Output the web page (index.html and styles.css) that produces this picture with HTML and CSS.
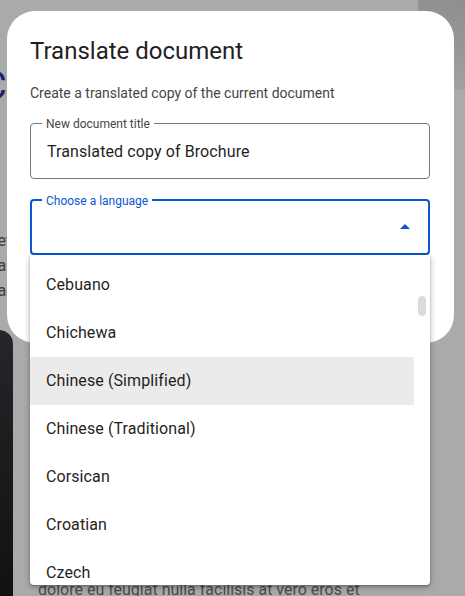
FILE: index.html
```html
<!DOCTYPE html>
<html lang="en">
<head>
  <meta charset="UTF-8">
  <meta name="viewport" content="width=device-width, initial-scale=1.0">
  <title>Translate document</title>
  <link rel="stylesheet" href="styles.css">
</head>
<body>
  <!-- page behind the scrim -->
  <div class="page">
    <div class="corner-shade"></div>
    <div class="doc-heading">Co</div>
    <div class="doc-lines">
      <p>Duis et</p>
      <p>Duis au</p>
      <p>Duis ac</p>
    </div>
    <div class="side-panel"></div>
    <p class="doc-footer-text">dolore eu feugiat nulla facilisis at vero eros et</p>
  </div>

  <div class="dialog">
    <h1 class="dialog-title">Translate document</h1>
    <p class="dialog-subtitle">Create a translated copy of the current document</p>

    <div class="field">
      <span class="field-label">New document title</span>
      <span class="field-value">Translated copy of Brochure</span>
    </div>

    <div class="field field-focused">
      <span class="field-label">Choose a language</span>
      <span class="caret"></span>

      <div class="menu">
        <ul class="menu-list">
          <li>Cebuano</li>
          <li>Chichewa</li>
          <li class="active">Chinese (Simplified)</li>
          <li>Chinese (Traditional)</li>
          <li>Corsican</li>
          <li>Croatian</li>
          <li>Czech</li>
        </ul>
        <div class="menu-scroll">
          <span class="thumb"></span>
        </div>
      </div>
    </div>
  </div>
</body>
</html>
```

FILE: styles.css
```css
* {
  margin: 0;
  padding: 0;
  box-sizing: border-box;
}

body {
  width: 465px;
  height: 596px;
  overflow: hidden;
  position: relative;
  font-family: 'Roboto', 'Noto Sans', sans-serif;
  background-color: #aaaaaa;
  color: #1f1f1f;
}

/* Background page (dimmed) */
.page {
  position: absolute;
  inset: 0;
}

.corner-shade {
  position: absolute;
  top: 0;
  right: 0;
  width: 47px;
  height: 90px;
  background: linear-gradient(200deg, #8f8f8f 0%, #999 60%, #a6a6a6 100%);
}

.doc-heading {
  position: absolute;
  top: 64px;
  left: -18px;
  font-size: 38px;
  color: #1b2467;
}

.doc-lines {
  position: absolute;
  top: 228px;
  left: -38px;
  font-size: 16px;
  line-height: 25px;
  color: #3c3c3c;
}

.side-panel {
  position: absolute;
  top: 330px;
  left: -20px;
  width: 33px;
  height: 280px;
  border-radius: 14px;
  background: linear-gradient(180deg, #25262a 0%, #101010 100%);
}

.doc-footer-text {
  position: absolute;
  top: 580px;
  left: 38px;
  font-size: 16px;
  color: #4a4a4a;
}

/* Dialog */
.dialog {
  position: absolute;
  top: 11px;
  left: 7px;
  width: 447px;
  height: 332px;
  padding: 24px 24px 0 23px;
  background-color: #fff;
  border-radius: 28px;
}

.dialog-title {
  font-size: 24px;
  font-weight: 400;
  line-height: 32px;
  color: #1f1f1f;
}

.dialog-subtitle {
  margin-top: 16px;
  font-size: 14px;
  line-height: 20px;
  color: #444746;
}

.field {
  position: relative;
  height: 56px;
  margin-top: 20px;
  padding: 0 16px;
  display: flex;
  align-items: center;
  border: 1px solid #747775;
  border-radius: 4px;
}

.field-label {
  position: absolute;
  top: -8px;
  left: 11px;
  padding: 0 4px;
  background-color: #fff;
  font-size: 12px;
  line-height: 16px;
  color: #444746;
}

.field-value {
  font-size: 16px;
  letter-spacing: 0.1px;
  color: #1f1f1f;
}

.field-focused {
  border: 2px solid #0b57d0;
}

.field-focused .field-label {
  top: -8px;
  left: 10px;
  color: #0b57d0;
}

.caret {
  position: absolute;
  right: 18px;
  top: 23px;
  width: 0;
  height: 0;
  border-left: 5px solid transparent;
  border-right: 5px solid transparent;
  border-bottom: 5px solid #0b57d0;
}

/* Dropdown menu */
.menu {
  position: absolute;
  top: 54px;
  left: -2px;
  right: -2px;
  height: 330px;
  display: flex;
  overflow: hidden;
  background-color: #fff;
  border-radius: 0 0 4px 4px;
  box-shadow: 0 2px 6px rgba(0, 0, 0, 0.3), 0 1px 2px rgba(0, 0, 0, 0.2);
}

.menu-list {
  flex: 1;
  list-style: none;
  padding-top: 6px;
}

.menu-list li {
  height: 48px;
  padding: 0 16px;
  font-size: 16px;
  line-height: 48px;
  letter-spacing: 0.1px;
  color: #1f1f1f;
}

.menu-list li.active {
  background-color: #ebebeb;
}

.menu-scroll {
  width: 16px;
  padding: 41px 4px 0 4px;
}

.thumb {
  display: block;
  width: 8px;
  height: 20px;
  border-radius: 4px;
  background-color: #dadce0;
}
```
